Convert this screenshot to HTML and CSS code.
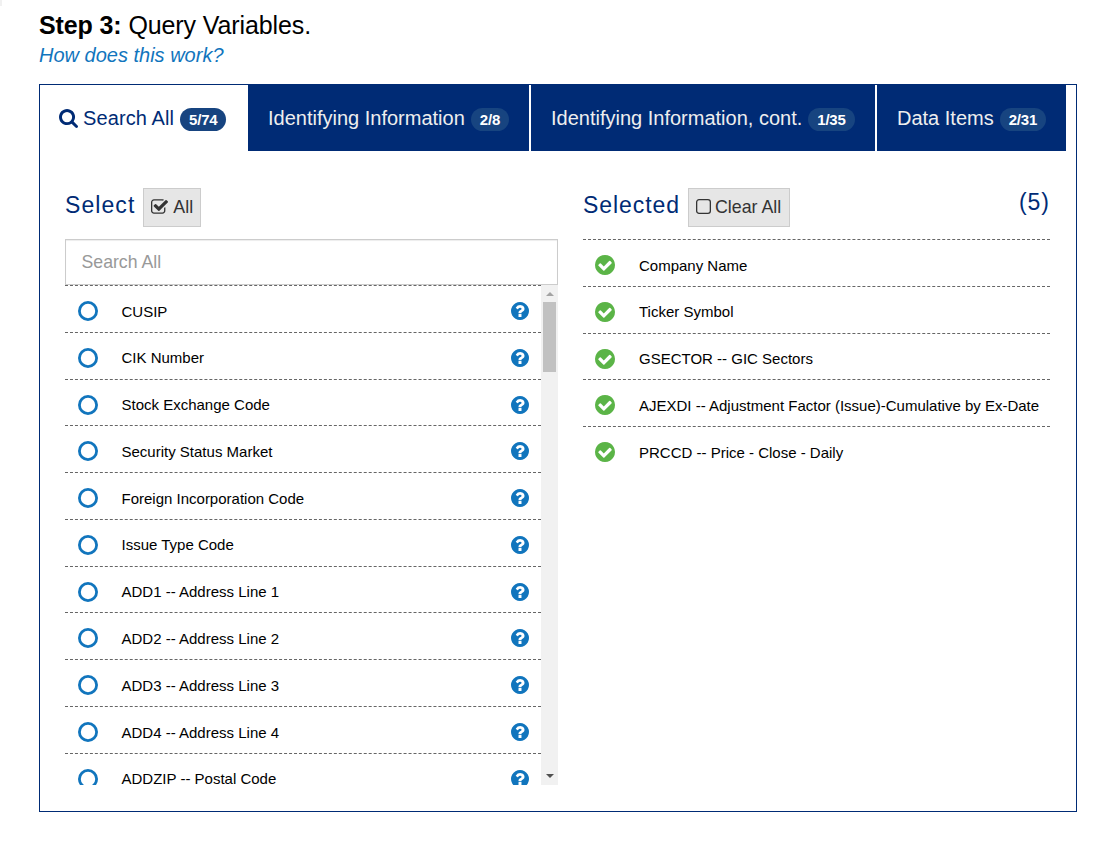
FILE: index.html
```html
<!DOCTYPE html>
<html lang="en">
<head>
<meta charset="utf-8">
<title>Query Variables</title>
<link rel="stylesheet" href="styles.css">
</head>
<body>
<svg class="sprite" aria-hidden="true">
  <symbol id="search" viewBox="128 128 1664 1664"><path d="M1216 832q0-185-131.5-316.5t-316.5-131.5-316.5 131.5-131.5 316.5 131.5 316.5 316.5 131.5 316.5-131.5 131.5-316.5zm512 832q0 52-38 90t-90 38q-54 0-90-38l-343-342q-179 124-399 124-143 0-273.5-55.5t-225-150-150-225-55.5-273.5 55.5-273.5 150-225 225-150 273.5-55.5 273.5 55.5 225 150 150 225 55.5 273.5q0 220-124 399l343 343q37 37 37 90z" transform="translate(64 0)"/></symbol>
  <symbol id="help" viewBox="128 128 1536 1536"><path d="M1024 1376v-192q0-14-9-23t-23-9h-192q-14 0-23 9t-9 23v192q0 14 9 23t23 9h192q14 0 23-9t9-23zm256-672q0-88-55.5-163t-138.5-116-170-41q-243 0-371 213-15 24 8 42l132 100q7 6 19 6 16 0 25-12 53-68 86-92 34-24 86-24 48 0 85.5 26t37.5 59q0 38-20 61t-68 45q-63 28-115.5 86.5t-52.5 125.5v36q0 14 9 23t23 9h192q14 0 23-9t9-23q0-19 21.5-49.5t54.5-49.5q32-18 49-28.5t46-35 44.5-48 28-60.5 12.5-81zm384 192q0 209-103 385.5t-279.5 279.5-385.5 103-385.5-103-279.5-279.5-103-385.5 103-385.5 279.5-279.5 385.5-103 385.5 103 279.5 279.5 103 385.5z"/></symbol>
  <symbol id="ok" viewBox="128 128 1536 1536"><path d="M1412 734q0-28-18-46l-91-90q-19-19-45-19t-45 19l-408 407-226-226q-19-19-45-19t-45 19l-91 90q-18 18-18 46 0 27 18 45l362 362q19 19 45 19 27 0 46-19l543-543q18-18 18-45zm252 162q0 209-103 385.5t-279.5 279.5-385.5 103-385.5-103-279.5-279.5-103-385.5 103-385.5 279.5-279.5 385.5-103 385.5 103 279.5 279.5 103 385.5z"/></symbol>
  <symbol id="ring" viewBox="0 0 20 20"><circle cx="10" cy="10" r="8.6" fill="none" stroke="currentColor" stroke-width="2.8"/></symbol>
  <symbol id="checked" viewBox="64 128 1664 1408"><path d="M1472 930v318q0 119-84.5 203.5t-203.5 84.5h-832q-119 0-203.5-84.5t-84.5-203.5v-832q0-119 84.5-203.5t203.5-84.5h832q63 0 117 25 15 7 18 23 3 17-9 29l-49 49q-10 10-23 10-3 0-9-2-23-6-45-6h-832q-66 0-113 47t-47 113v832q0 66 47 113t113 47h832q66 0 113-47t47-113v-254q0-13 9-22l64-64q10-10 23-10 6 0 12 3 20 8 20 29zm231-489l-814 814q-24 24-57 24t-57-24l-430-430q-24-24-24-57t24-57l110-110q24-24 57-24t57 24l263 263 647-647q24-24 57-24t57 24l110 110q24 24 24 57t-24 57z"/></symbol>
  <symbol id="box" viewBox="0 0 15 15"><rect x=".65" y=".65" width="13.7" height="13.7" rx="2.4" fill="none" stroke="currentColor" stroke-width="1.3"/></symbol>
</svg>
<main class="page">
  <h1 class="title"><b>Step 3:</b> Query Variables.</h1>
  <a class="how">How does this work?</a>
  <section class="panel">
    <nav class="tabs">
      <a class="tab active t1"><svg class="search-icon"><use href="#search"/></svg><span class="label">Search All</span><span class="badge">5/74</span></a>
      <a class="tab t2"><span class="label">Identifying Information</span><span class="badge">2/8</span></a>
      <a class="tab t3"><span class="label">Identifying Information, cont.</span><span class="badge">1/35</span></a>
      <a class="tab t4"><span class="label">Data Items</span><span class="badge">2/31</span></a>
    </nav>
    <div class="columns">
      <div class="left">
        <header class="head"><h2 class="heading">Select</h2><button class="btn all"><svg class="check-icon"><use href="#checked"/></svg>All</button></header>
        <input class="filter" placeholder="Search All">
        <div class="scroller">
          <ul class="list">
            <li class="row"><svg class="state"><use href="#ring"/></svg><span class="name">CUSIP</span><svg class="help"><use href="#help"/></svg></li>
            <li class="row"><svg class="state"><use href="#ring"/></svg><span class="name">CIK Number</span><svg class="help"><use href="#help"/></svg></li>
            <li class="row"><svg class="state"><use href="#ring"/></svg><span class="name">Stock Exchange Code</span><svg class="help"><use href="#help"/></svg></li>
            <li class="row"><svg class="state"><use href="#ring"/></svg><span class="name">Security Status Market</span><svg class="help"><use href="#help"/></svg></li>
            <li class="row"><svg class="state"><use href="#ring"/></svg><span class="name">Foreign Incorporation Code</span><svg class="help"><use href="#help"/></svg></li>
            <li class="row"><svg class="state"><use href="#ring"/></svg><span class="name">Issue Type Code</span><svg class="help"><use href="#help"/></svg></li>
            <li class="row"><svg class="state"><use href="#ring"/></svg><span class="name">ADD1 -- Address Line 1</span><svg class="help"><use href="#help"/></svg></li>
            <li class="row"><svg class="state"><use href="#ring"/></svg><span class="name">ADD2 -- Address Line 2</span><svg class="help"><use href="#help"/></svg></li>
            <li class="row"><svg class="state"><use href="#ring"/></svg><span class="name">ADD3 -- Address Line 3</span><svg class="help"><use href="#help"/></svg></li>
            <li class="row"><svg class="state"><use href="#ring"/></svg><span class="name">ADD4 -- Address Line 4</span><svg class="help"><use href="#help"/></svg></li>
            <li class="row"><svg class="state"><use href="#ring"/></svg><span class="name">ADDZIP -- Postal Code</span><svg class="help"><use href="#help"/></svg></li>
          </ul>
          <div class="bar"><span class="arrow up"></span><span class="thumb"></span><span class="arrow down"></span></div>
        </div>
      </div>
      <div class="right">
        <header class="head"><h2 class="heading selected">Selected</h2><button class="btn clear"><svg class="box-icon"><use href="#box"/></svg>Clear All</button><span class="count">(5)</span></header>
        <ul class="list chosen">
          <li class="row"><svg class="state"><use href="#ok"/></svg><span class="name">Company Name</span></li>
          <li class="row"><svg class="state"><use href="#ok"/></svg><span class="name">Ticker Symbol</span></li>
          <li class="row"><svg class="state"><use href="#ok"/></svg><span class="name">GSECTOR -- GIC Sectors</span></li>
          <li class="row"><svg class="state"><use href="#ok"/></svg><span class="name">AJEXDI -- Adjustment Factor (Issue)-Cumulative by Ex-Date</span></li>
          <li class="row"><svg class="state"><use href="#ok"/></svg><span class="name">PRCCD -- Price - Close - Daily</span></li>
        </ul>
      </div>
    </div>
  </section>
</main>
</body>
</html>
```
FILE: styles.css
```css
* { box-sizing: border-box; }
body { margin: 0; background: #fff; color: #000; font-family: "Liberation Sans", Arial, sans-serif; height: 850px; overflow: hidden; }
body::before { content: ""; position: absolute; left: 0; top: 0; width: 2px; height: 6px; background: #f1f1f1; }
svg { display: block; fill: currentColor; flex: none; }
.sprite { position: absolute; width: 0; height: 0; }
.page { padding: 10px 37px 0 39px; }
.title { margin: 0; font-size: 25px; line-height: 30px; font-weight: 400; letter-spacing: -.11px; white-space: nowrap; }
.how { display: block; height: 44px; font-size: 20px; line-height: 30px; font-style: italic; color: #1175bd; }
.panel { height: 728px; width: 1038px; border: 1px solid #002b75; }
.tabs { display: flex; height: 66px; gap: 2px; }
.tab { display: flex; align-items: flex-start; background: #002b75; color: #eee; padding: 18px 0 0 20px; font-size: 20px; line-height: 30px; white-space: nowrap; }
.active { background: #fff; color: #002b75; padding-left: 19px; }
.active .label { letter-spacing: .1px; }
.t1 { width: 206px; }
.t2 { width: 281px; }
.t3 { width: 344px; }
.t4 { width: 189px; }
.search-icon { width: 19px; height: 19px; margin: 6px 5px 0 0; }
.badge { height: 23px; margin: 5px 0 0 6px; padding: 0 9px; border-radius: 12px; background: #174480; color: #fff; font-size: 15px; letter-spacing: -.2px; line-height: 23px; font-weight: 700; }
.columns { display: flex; padding: 37px 26px 0 25px; gap: 25px; }
.left { width: 493px; }
.right { width: 467px; }
.head { display: flex; height: 51px; }
.heading { margin: 0 8px 0 0; font-size: 23px; line-height: 34px; font-weight: 400; letter-spacing: 1.07px; color: #002b75; }
.selected { letter-spacing: .93px; }
.btn { display: flex; align-items: center; height: 39px; padding: 0 7px; border: 1px solid #ccc; border-radius: 0; background: #e6e6e6; color: #333; font: 17.8px "Liberation Sans", Arial, sans-serif; white-space: nowrap; }
.all { width: 58px; }
.clear { width: 102px; }
.check-icon { width: 17px; height: 15px; margin: -3px 5px 0 0; }
.box-icon { width: 15px; height: 15px; margin: -3px 4px 0 0; }
.count { margin-left: auto; font-size: 23px; line-height: 28px; letter-spacing: 1px; color: #002b75; }
.filter { display: block; width: 493px; height: 46px; padding: 0 15.5px; border: 1px solid #ccc; border-radius: 0; box-shadow: inset 0 1px 1px rgba(0,0,0,.075); font: 17.7px "Liberation Sans", Arial, sans-serif; }
.filter::placeholder { color: #999; opacity: 1; }
.scroller { display: flex; height: 500px; overflow: hidden; }
.list { list-style: none; margin: 0; padding: 0; flex: 1; }
.row { display: flex; align-items: flex-start; height: 46.77px; padding: 15px 12px 0 13px; border-top: 1px dashed #666; font-size: 15px; }
.state { width: 20px; height: 20px; color: #1175bd; }
.name { flex: 1; margin: -.35px 0 0 23.5px; line-height: 22px; white-space: nowrap; }
.help { width: 18px; height: 18px; margin-top: 1px; color: #1175bd; }
.chosen .row { padding: 15px 0 0 12px; }
.chosen .state { color: #5bb447; }
.chosen .name { margin-left: 24px; }
.bar { width: 17px; background: #f1f1f1; display: flex; flex-direction: column; align-items: center; }
.arrow { border: 4px solid transparent; width: 0; height: 0; }
.up { border-top: 0; border-bottom-color: #a3a3a3; margin-top: 7px; }
.thumb { width: 13px; height: 70px; margin-top: 6px; background: #c1c1c1; }
.down { border-bottom: 0; border-top-color: #505050; margin-top: auto; margin-bottom: 7px; }
```
